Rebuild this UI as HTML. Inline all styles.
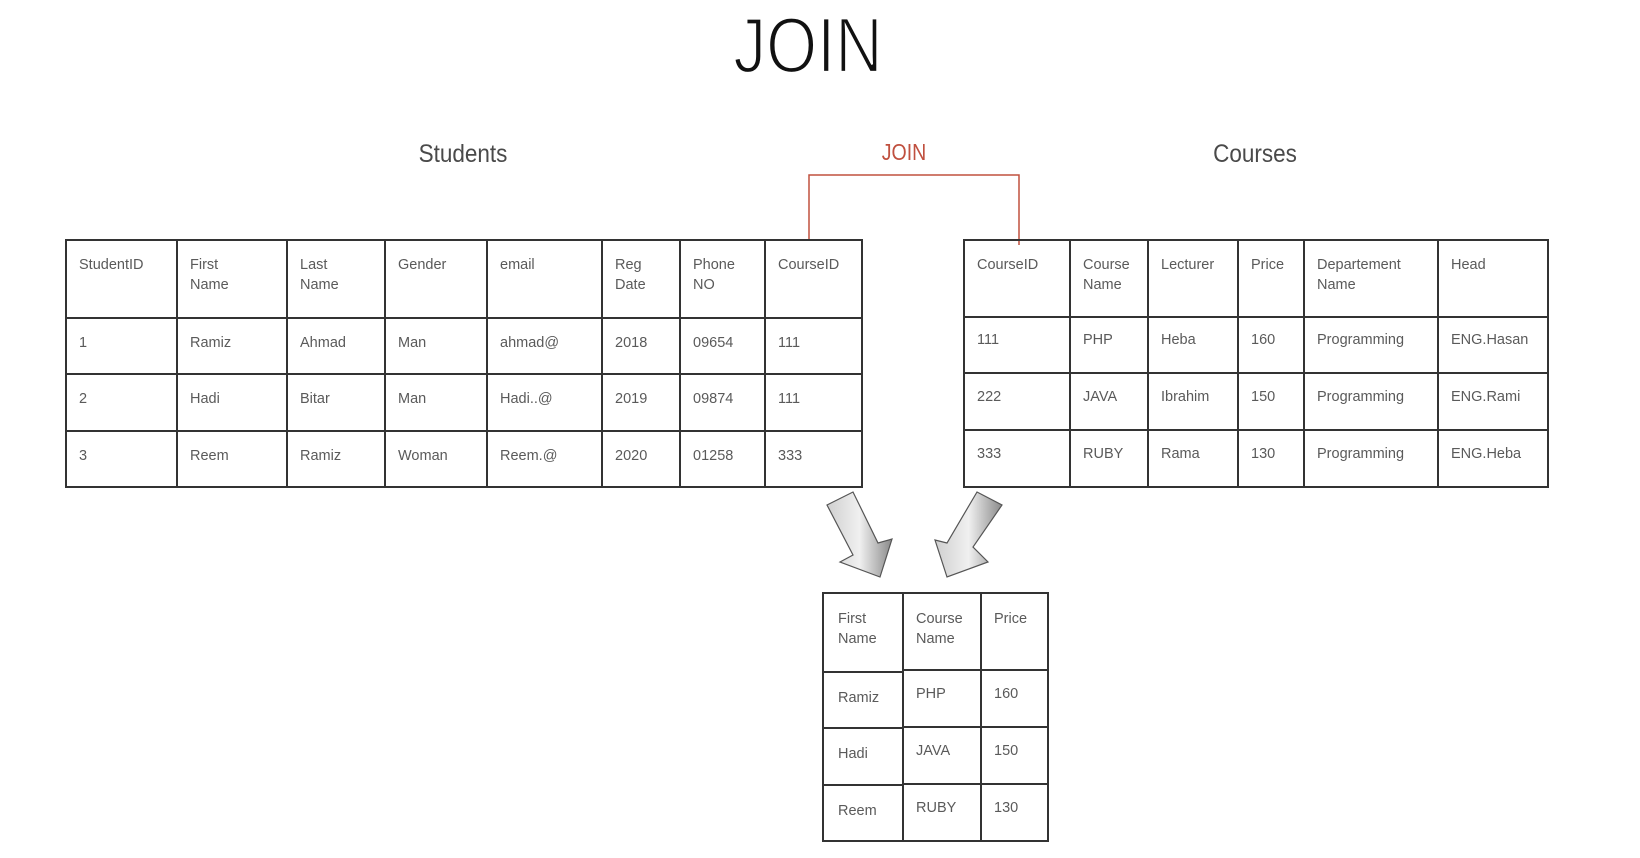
<!DOCTYPE html>
<html><head><meta charset="utf-8"><style>
html,body{margin:0;padding:0;background:#fff;}
svg{display:block;}
text{font-family:"Liberation Sans",sans-serif;font-size:14.5px;fill:#5a5a5a;}
</style></head><body>
<svg width="1640" height="858" viewBox="0 0 1640 858" xmlns="http://www.w3.org/2000/svg">
<defs>
<linearGradient id="g" x1="0" y1="0" x2="1" y2="0">
<stop offset="0" stop-color="#cfcfcf"/><stop offset="0.5" stop-color="#f0f0f0"/><stop offset="1" stop-color="#8a8a8a"/>
</linearGradient>
</defs>
<text x="808" y="72" text-anchor="middle" style="font-family:'Liberation Sans',sans-serif;font-size:78px;fill:#111;stroke:#fff;stroke-width:2.2;paint-order:normal" transform="translate(808 0) scale(0.84 1) translate(-808 0)">JOIN</text>
<text x="463" y="162" text-anchor="middle" style="font-size:25px;fill:#4a4a4a" transform="translate(463 0) scale(0.9 1) translate(-463 0)">Students</text>
<text x="1255" y="162" text-anchor="middle" style="font-size:25px;fill:#4a4a4a" transform="translate(1255 0) scale(0.9 1) translate(-1255 0)">Courses</text>
<text x="904" y="160" text-anchor="middle" style="font-size:23px;fill:#c0503f" transform="translate(904 0) scale(0.85 1) translate(-904 0)">JOIN</text>
<polyline points="809,241 809,175 1019,175 1019,245" fill="none" stroke="#c0503f" stroke-width="1.5"/>

<g stroke="#333" stroke-width="2" fill="none">
<rect x="66" y="240" width="796" height="247"/>
<line x1="66" y1="318" x2="862" y2="318"/><line x1="66" y1="374" x2="862" y2="374"/><line x1="66" y1="431" x2="862" y2="431"/>
<line x1="177" y1="240" x2="177" y2="487"/><line x1="287" y1="240" x2="287" y2="487"/><line x1="385" y1="240" x2="385" y2="487"/><line x1="487" y1="240" x2="487" y2="487"/><line x1="602" y1="240" x2="602" y2="487"/><line x1="680" y1="240" x2="680" y2="487"/><line x1="765" y1="240" x2="765" y2="487"/>
<rect x="964" y="240" width="584" height="247"/>
<line x1="964" y1="317" x2="1548" y2="317"/><line x1="964" y1="373" x2="1548" y2="373"/><line x1="964" y1="430" x2="1548" y2="430"/>
<line x1="1070" y1="240" x2="1070" y2="487"/><line x1="1148" y1="240" x2="1148" y2="487"/><line x1="1238" y1="240" x2="1238" y2="487"/><line x1="1304" y1="240" x2="1304" y2="487"/><line x1="1438" y1="240" x2="1438" y2="487"/>
<rect x="823" y="593" width="225" height="248"/>
<line x1="903" y1="593" x2="903" y2="841"/><line x1="981" y1="593" x2="981" y2="841"/>
<line x1="823" y1="672" x2="903" y2="672"/><line x1="823" y1="728" x2="903" y2="728"/><line x1="823" y1="785" x2="903" y2="785"/>
<line x1="903" y1="670" x2="1048" y2="670"/><line x1="903" y1="727" x2="1048" y2="727"/><line x1="903" y1="784" x2="1048" y2="784"/>
</g>

<polygon points="827,505 853,492 878,543 892,539 880,577 840,562 853,555" fill="url(#g)" stroke="#555" stroke-width="1.2"/>
<polygon points="977,492 1002,505 973,547 988,562 947,577 935,540 947,543" fill="url(#g)" stroke="#555" stroke-width="1.2"/>

<text x="79" y="269">StudentID</text>
<text x="190" y="269">First</text><text x="190" y="289">Name</text>
<text x="300" y="269">Last</text><text x="300" y="289">Name</text>
<text x="398" y="269">Gender</text>
<text x="500" y="269">email</text>
<text x="615" y="269">Reg</text><text x="615" y="289">Date</text>
<text x="693" y="269">Phone</text><text x="693" y="289">NO</text>
<text x="778" y="269">CourseID</text>

<text x="79" y="347">1</text><text x="190" y="347">Ramiz</text><text x="300" y="347">Ahmad</text><text x="398" y="347">Man</text><text x="500" y="347">ahmad@</text><text x="615" y="347">2018</text><text x="693" y="347">09654</text><text x="778" y="347">111</text>
<text x="79" y="403">2</text><text x="190" y="403">Hadi</text><text x="300" y="403">Bitar</text><text x="398" y="403">Man</text><text x="500" y="403">Hadi..@</text><text x="615" y="403">2019</text><text x="693" y="403">09874</text><text x="778" y="403">111</text>
<text x="79" y="460">3</text><text x="190" y="460">Reem</text><text x="300" y="460">Ramiz</text><text x="398" y="460">Woman</text><text x="500" y="460">Reem.@</text><text x="615" y="460">2020</text><text x="693" y="460">01258</text><text x="778" y="460">333</text>

<text x="977" y="269">CourseID</text>
<text x="1083" y="269">Course</text><text x="1083" y="289">Name</text>
<text x="1161" y="269">Lecturer</text>
<text x="1251" y="269">Price</text>
<text x="1317" y="269">Departement</text><text x="1317" y="289">Name</text>
<text x="1451" y="269">Head</text>

<text x="977" y="344">111</text><text x="1083" y="344">PHP</text><text x="1161" y="344">Heba</text><text x="1251" y="344">160</text><text x="1317" y="344">Programming</text><text x="1451" y="344">ENG.Hasan</text>
<text x="977" y="401">222</text><text x="1083" y="401">JAVA</text><text x="1161" y="401">Ibrahim</text><text x="1251" y="401">150</text><text x="1317" y="401">Programming</text><text x="1451" y="401">ENG.Rami</text>
<text x="977" y="458">333</text><text x="1083" y="458">RUBY</text><text x="1161" y="458">Rama</text><text x="1251" y="458">130</text><text x="1317" y="458">Programming</text><text x="1451" y="458">ENG.Heba</text>

<text x="838" y="623">First</text><text x="838" y="643">Name</text>
<text x="916" y="623">Course</text><text x="916" y="643">Name</text>
<text x="994" y="623">Price</text>
<text x="838" y="702">Ramiz</text><text x="916" y="698">PHP</text><text x="994" y="698">160</text>
<text x="838" y="758">Hadi</text><text x="916" y="755">JAVA</text><text x="994" y="755">150</text>
<text x="838" y="815">Reem</text><text x="916" y="812">RUBY</text><text x="994" y="812">130</text>
</svg>
</body></html>
